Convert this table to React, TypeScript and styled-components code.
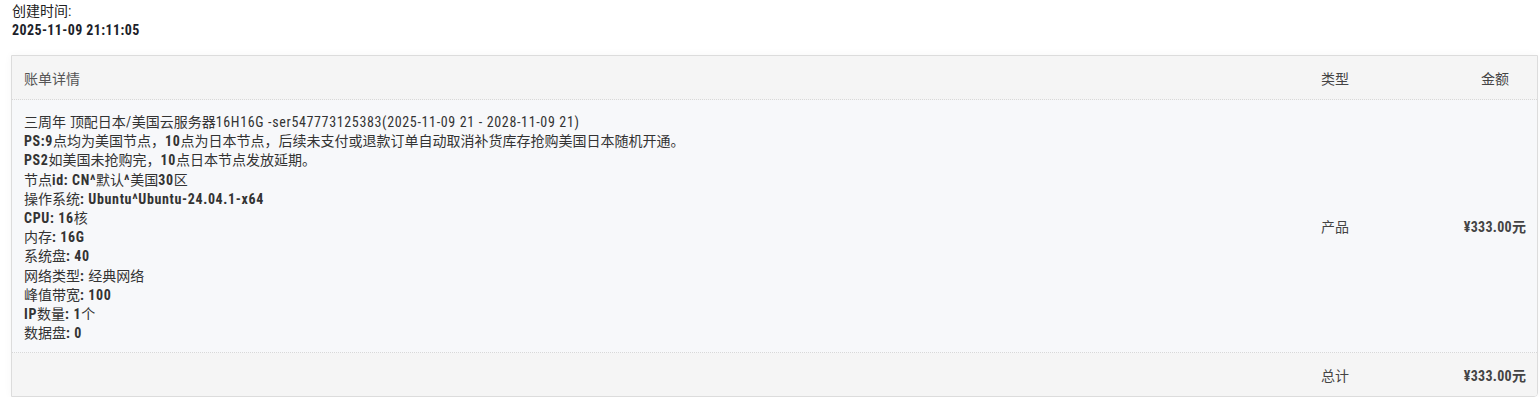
import React from 'react';
import styled, { createGlobalStyle } from 'styled-components';

const GlobalStyle = createGlobalStyle`
  body {
    margin: 0;
    background: #fff;
    font-family: "Roboto Condensed", "DejaVu Sans Condensed", "Noto Sans CJK SC", sans-serif;
    font-size: 14px;
    color: #333;
  }
`;

const lines = [
  'PS:9点均为美国节点，10点为日本节点，后续未支付或退款订单自动取消补货库存抢购美国日本随机开通。',
  'PS2如美国未抢购完，10点日本节点发放延期。',
  '节点id: CN^默认^美国30区',
  '操作系统: Ubuntu^Ubuntu-24.04.1-x64',
  'CPU: 16核',
  '内存: 16G',
  '系统盘: 40',
  '网络类型: 经典网络',
  '峰值带宽: 100',
  'IP数量: 1个',
  '数据盘: 0',
];

// ascii runs are bold in the source page, the chinese stays regular
const renderLine = (text: string, bold = true) =>
  text.split(/([\x20-\x7E]+)/).map((part, i) =>
    /[\x20-\x7E]/.test(part) ? (
      <Latin key={i} bold={bold}>{part}</Latin>
    ) : (
      <span key={i}>{part}</span>
    )
  );

const App: React.FC = () => {
  return (
    <Page>
      <GlobalStyle />
      <Created>
        <CreatedLabel>创建时间:</CreatedLabel>
        <CreatedValue>2025-11-09 21:11:05</CreatedValue>
      </Created>
      <Panel>
        <HeadRow>
          <Cell>账单详情</Cell>
          <TypeCell>类型</TypeCell>
          <AmountCell>金额</AmountCell>
        </HeadRow>
        <BodyRow>
          <Detail>
            <Line>{renderLine('三周年 顶配日本/美国云服务器16H16G -ser547773125383(2025-11-09 21 - 2028-11-09 21)', false)}</Line>
            {lines.map((l, idx) => (
              <Line key={idx}>{renderLine(l)}</Line>
            ))}
          </Detail>
          <TypeCell>产品</TypeCell>
          <AmountCell bold>¥333.00元</AmountCell>
        </BodyRow>
        <FootRow>
          <Cell />
          <TypeCell>总计</TypeCell>
          <AmountCell bold>¥333.00元</AmountCell>
        </FootRow>
      </Panel>
    </Page>
  );
};

const Page = styled.div`
  padding: 2px 2px 0 11px;
`;

const Created = styled.div`
  line-height: 19px;
  padding-left: 1px;
  margin-bottom: 15px;
`;

const CreatedLabel = styled.div`
  color: #222;
`;

const CreatedValue = styled.div`
  font-weight: bold;
  letter-spacing: 0.4px;
  color: #1d1f2b;
`;

const Panel = styled.div`
  border: 1px solid #dcdcdc;
  border-radius: 0 0 4px 0;
  box-shadow: 0 0 8px rgba(0, 0, 0, 0.04);
  overflow: hidden;
`;

const Row = styled.div`
  display: grid;
  grid-template-columns: 1fr 132px 84px;
  align-items: center;
  box-sizing: border-box;
`;

const HeadRow = styled(Row)`
  height: 44px;
  background: #f5f5f5;
  color: #555;
  border-bottom: 1px dotted #d8d8d8;
`;

const BodyRow = styled(Row)`
  background: #f7f8fa;
  border-bottom: 1px dotted #d8d8d8;
`;

const FootRow = styled(Row)`
  height: 43px;
  background: #f5f5f5;
  color: #444;
`;

const Cell = styled.div`
  padding-left: 12px;
`;

const Detail = styled.div`
  padding: 13px 12px 9px;
  color: #333;
`;

const Line = styled.div`
  line-height: 19.2px;
  white-space: nowrap;
`;

const Latin = styled.span<{ bold?: boolean }>`
  font-weight: ${({ bold }) => (bold ? 'bold' : 'normal')};
  letter-spacing: 0.65px;
`;

const TypeCell = styled.div`
  color: #444;
`;

const AmountCell = styled.div<{ bold?: boolean }>`
  text-align: center;
  color: #444;
  letter-spacing: ${({ bold }) => (bold ? '0.3px' : '0')};
  font-weight: ${({ bold }) => (bold ? 'bold' : 'normal')};
`;

export default App;
